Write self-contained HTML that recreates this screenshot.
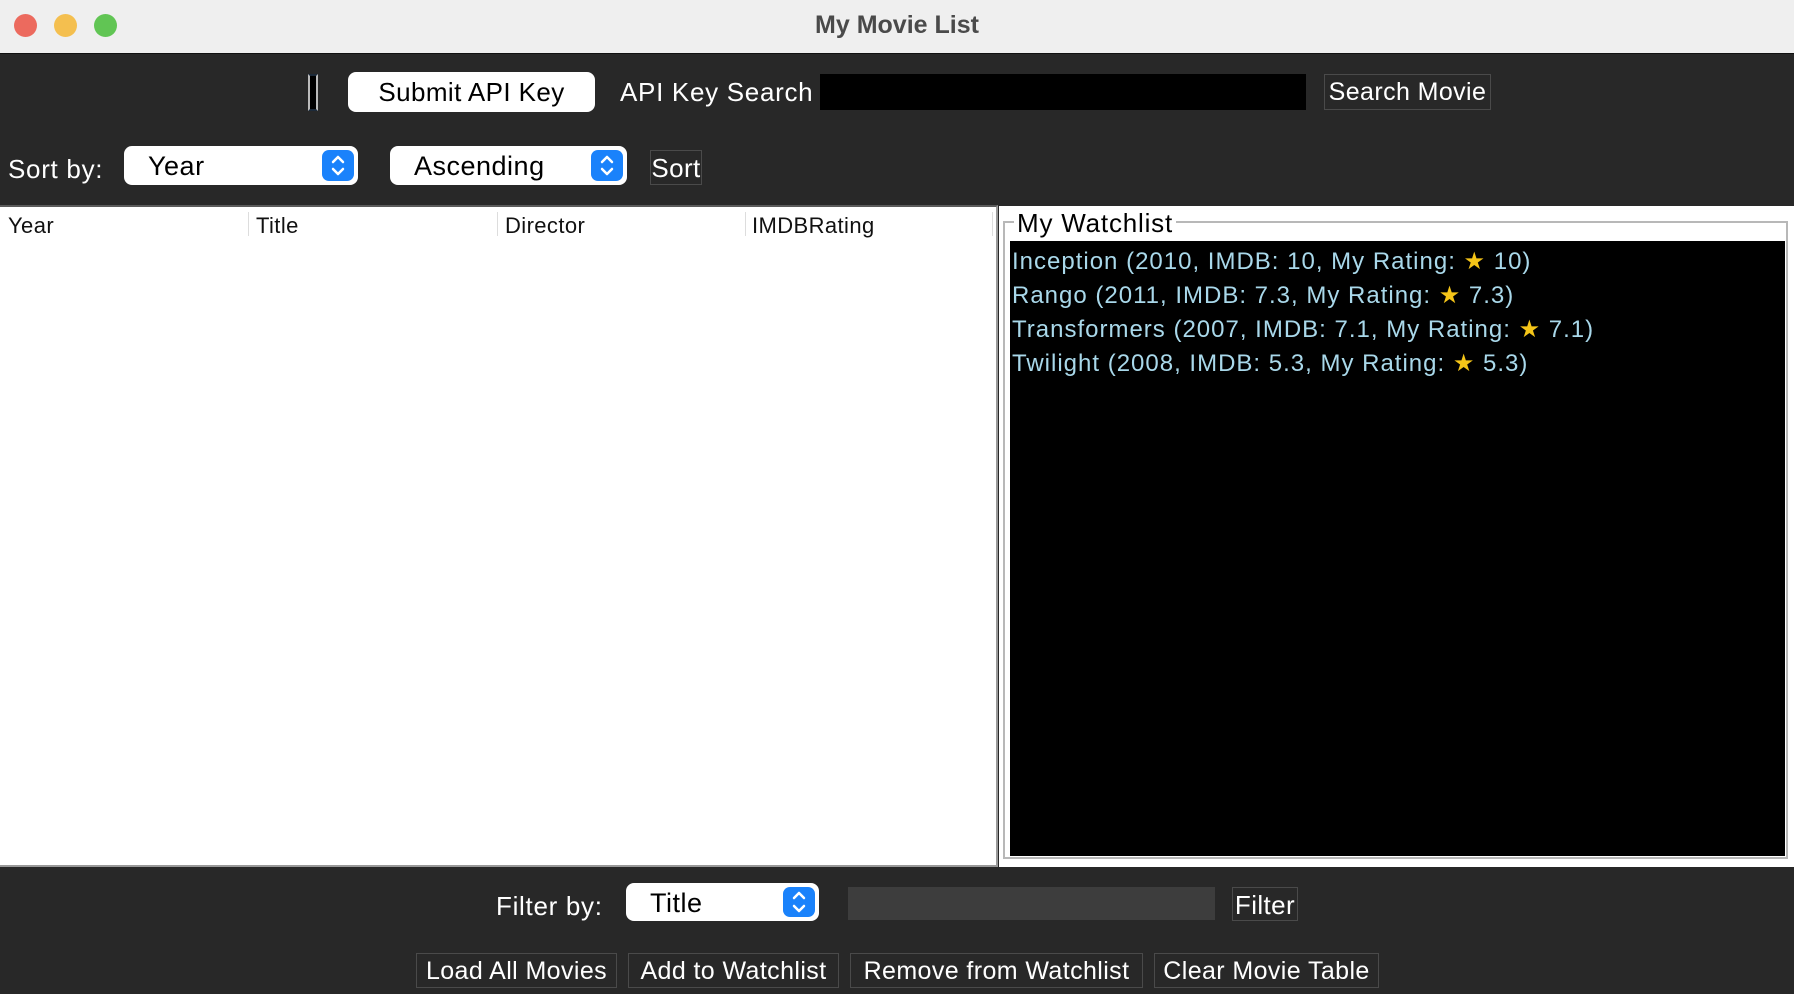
<!DOCTYPE html>
<html><head><meta charset="utf-8"><style>
*{margin:0;padding:0;box-sizing:border-box}
body{width:1794px;height:994px;overflow:hidden;background:#282828;font-family:"Liberation Sans","DejaVu Sans",sans-serif;position:relative}
.a{position:absolute;white-space:nowrap}
.tb{left:0;top:0;width:1794px;height:54px;background:#efefef;border-bottom:1px solid #111}
.dot{width:23px;height:23px;border-radius:50%;top:14px}
.btn{border:1px solid #4a4a4a;color:#fff;font-size:25px;text-align:center;line-height:35px;letter-spacing:0.4px}
.combo{background:#fff;border-radius:8px;color:#000;font-size:27px;line-height:41px;padding-left:24px;letter-spacing:0.5px}
.step{background:#1a82fb;border-radius:7px;width:32px;top:4px;bottom:4px;right:4px}
.wt{color:#fff;font-size:26px;letter-spacing:0.7px}
.hd{font-size:22px;color:#111;top:213px;letter-spacing:0.4px}
.sep{top:212px;width:1px;height:24px;background:#ddd}
.li{color:#a9d8ea;font-size:24px;left:1012px;letter-spacing:1px}
</style></head><body>
<div class="a tb"></div>
<div class="a dot" style="left:14px;background:#ec6a5e"></div>
<div class="a dot" style="left:54px;background:#f4bf4f"></div>
<div class="a dot" style="left:94px;background:#61c554"></div>
<div class="a" style="left:0;width:1794px;top:11px;text-align:center;font-weight:bold;font-size:25px;color:#4a4a4a">My Movie List</div>

<div class="a" style="left:308px;top:74px;width:10px;height:37px;border:2px solid #1c2a3a;background:#000;border-left-color:#bbb;border-right-color:#bbb"></div>
<div class="a" style="left:348px;top:72px;width:247px;height:40px;background:#fff;border-radius:8px;font-size:26px;line-height:40px;text-align:center;color:#000;letter-spacing:0.4px">Submit API Key</div>
<div class="a wt" style="left:620px;top:77px">API Key Search</div>
<div class="a" style="left:820px;top:74px;width:486px;height:36px;background:#000"></div>
<div class="a btn" style="left:1324px;top:74px;width:167px;height:36px">Search Movie</div>

<div class="a wt" style="left:8px;top:154px">Sort by:</div>
<div class="a combo" style="left:124px;top:146px;width:234px;height:39px">Year<div class="a step"><svg width="32" height="31" viewBox="0 0 32 31"><path d="M11 12l5-5 5 5M11 19l5 5 5-5" stroke="#fff" stroke-width="2.5" fill="none" stroke-linecap="round" stroke-linejoin="round"/></svg></div></div>
<div class="a combo" style="left:390px;top:146px;width:237px;height:39px">Ascending<div class="a step"><svg width="32" height="31" viewBox="0 0 32 31"><path d="M11 12l5-5 5 5M11 19l5 5 5-5" stroke="#fff" stroke-width="2.5" fill="none" stroke-linecap="round" stroke-linejoin="round"/></svg></div></div>
<div class="a btn" style="left:650px;top:150px;width:52px;height:35px;font-size:26px">Sort</div>

<div class="a" style="left:0;top:205px;width:998px;height:662px;background:#fff;border-top:2px solid #5a5a5a;border-right:2px solid #999;border-bottom:2px solid #999"></div>
<div class="a hd" style="left:8px">Year</div>
<div class="a sep" style="left:248px"></div><div class="a hd" style="left:256px">Title</div>
<div class="a sep" style="left:497px"></div><div class="a hd" style="left:505px">Director</div>
<div class="a sep" style="left:745px"></div><div class="a hd" style="left:752px">IMDBRating</div>
<div class="a sep" style="left:992px"></div>

<div class="a" style="left:999px;top:206px;width:795px;height:661px;background:#fff"></div>
<div class="a" style="left:1003px;top:221px;width:785px;height:638px;border:2px solid #b8b8b8"></div>
<div class="a" style="left:1014px;top:208px;background:#fff;padding:0 3px;font-size:26px;color:#000;letter-spacing:0.8px">My Watchlist</div>
<div class="a" style="left:1010px;top:241px;width:775px;height:615px;background:#000"></div>
<div class="a li" style="top:247px">Inception (2010, IMDB: 10, My Rating: <span style="color:#f5c518">★</span> 10)</div>
<div class="a li" style="top:281px">Rango (2011, IMDB: 7.3, My Rating: <span style="color:#f5c518">★</span> 7.3)</div>
<div class="a li" style="top:315px">Transformers (2007, IMDB: 7.1, My Rating: <span style="color:#f5c518">★</span> 7.1)</div>
<div class="a li" style="top:349px">Twilight (2008, IMDB: 5.3, My Rating: <span style="color:#f5c518">★</span> 5.3)</div>

<div class="a wt" style="left:496px;top:891px">Filter by:</div>
<div class="a combo" style="left:626px;top:883px;width:193px;height:38px;line-height:40px">Title<div class="a step"><svg width="32" height="30" viewBox="0 0 32 30"><path d="M11 11l5-5 5 5M11 19l5 5 5-5" stroke="#fff" stroke-width="2.5" fill="none" stroke-linecap="round" stroke-linejoin="round"/></svg></div></div>
<div class="a" style="left:848px;top:887px;width:367px;height:33px;background:#3d3d3d"></div>
<div class="a btn" style="left:1232px;top:887px;width:66px;height:34px;font-size:26px">Filter</div>

<div class="a btn" style="left:416px;top:953px;width:201px;height:35px;font-size:25px">Load All Movies</div>
<div class="a btn" style="left:628px;top:953px;width:211px;height:35px;font-size:25px">Add to Watchlist</div>
<div class="a btn" style="left:850px;top:953px;width:293px;height:35px;font-size:25px">Remove from Watchlist</div>
<div class="a btn" style="left:1154px;top:953px;width:225px;height:35px;font-size:25px">Clear Movie Table</div>
</body></html>
